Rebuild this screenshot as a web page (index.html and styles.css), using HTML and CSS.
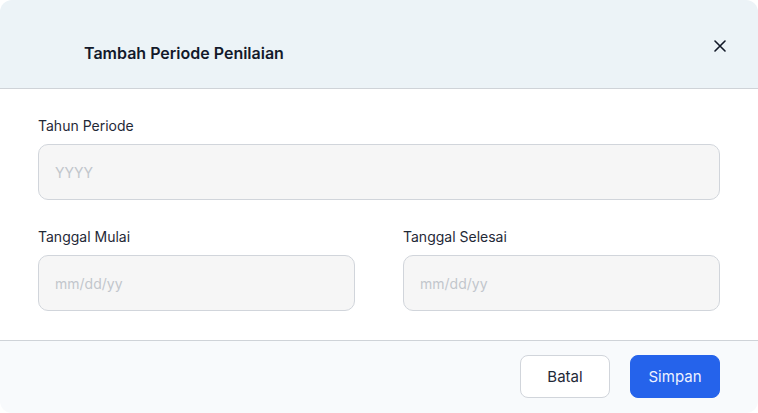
FILE: index.html
```html
<!DOCTYPE html>
<html>
<head>
<meta charset="utf-8">
<link rel="stylesheet" href="styles.css">
</head>
<body>
<div class="dialog">
  <div class="header">
    <h2 class="title">Tambah Periode Penilaian</h2>
    <button class="close" aria-label="Tutup">
      <svg width="12" height="12" viewBox="0 0 12 12"><path d="M1 1L11 11M11 1L1 11" stroke="#111827" stroke-width="1.6" stroke-linecap="round"/></svg>
    </button>
  </div>
  <div class="body">
    <div class="field">
      <label class="label">Tahun Periode</label>
      <input class="input" type="text" placeholder="YYYY">
    </div>
    <div class="row">
      <div class="field">
        <label class="label">Tanggal Mulai</label>
        <input class="input" type="text" placeholder="mm/dd/yy">
      </div>
      <div class="field">
        <label class="label">Tanggal Selesai</label>
        <input class="input" type="text" placeholder="mm/dd/yy">
      </div>
    </div>
  </div>
  <div class="footer">
    <button class="btn btn-cancel">Batal</button>
    <button class="btn btn-primary">Simpan</button>
  </div>
</div>
</body>
</html>
```
FILE: styles.css
```css
* { box-sizing: border-box; }
html, body { margin: 0; padding: 0; background: #ffffff; }
body { font-family: Inter, "Noto Sans", sans-serif; width: 758px; height: 413px; overflow: hidden; }
.dialog {
  width: 758px;
  height: 413px;
  border-radius: 12px;
  overflow: hidden;
  display: flex;
  flex-direction: column;
  background: #fff;
}
.header {
  height: 89px;
  background: #ecf3f7;
  border-bottom: 1px solid #cfd3d8;
  display: flex;
  align-items: center;
  justify-content: space-between;
  padding: 0 32px 0 84px;
}
.title {
  margin: 0;
  font-size: 16px;
  font-weight: 600;
  color: #131a2b;
  padding-top: 17px;
}
.close {
  border: 0;
  background: transparent;
  padding: 0;
  width: 12px;
  height: 12px;
  margin-top: 3px;
  display: flex;
  align-items: center;
  justify-content: center;
}
.body {
  padding: 27px 38px 29px;
  display: flex;
  flex-direction: column;
  gap: 27px;
}
.row {
  display: grid;
  grid-template-columns: 1fr 1fr;
  gap: 48px;
}
.field { display: flex; flex-direction: column; gap: 8px; }
.label {
  font-size: 14px;
  line-height: 20px;
  color: #1f2937;
}
.input {
  height: 56px;
  border: 1px solid #d1d5db;
  border-radius: 10px;
  background: #f6f6f6;
  padding: 0 16px;
  font-family: inherit;
  font-size: 14px;
  color: #111827;
  outline: none;
}
.input::placeholder { color: #c2c6cc; }
.footer {
  flex: 1;
  background: #f8fafc;
  border-top: 1px solid #cfd3d8;
  display: flex;
  justify-content: flex-end;
  align-items: flex-start;
  gap: 20px;
  padding: 14px 38px 0;
}
.btn {
  width: 90px;
  height: 43px;
  border-radius: 8px;
  font-family: inherit;
  font-size: 15px;
  cursor: pointer;
}
.btn-cancel {
  background: #fff;
  border: 1px solid #d1d5db;
  color: #1f2937;
}
.btn-primary {
  background: #2563eb;
  border: 1px solid #2563eb;
  color: #eef2ff;
}
```
